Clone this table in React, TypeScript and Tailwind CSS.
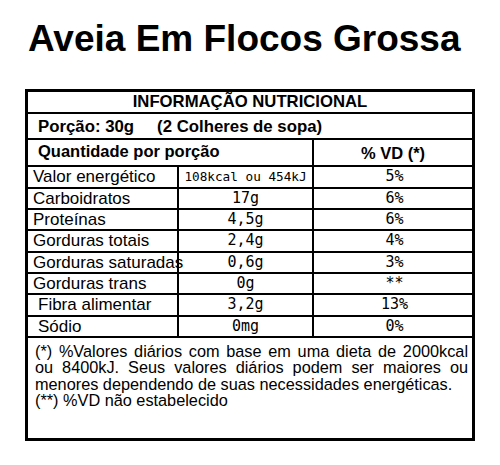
const rows = [
  { label: "Valor energético", value: "108kcal ou 454kJ", vd: "5%", h: "h-[22px]", small: true },
  { label: "Carboidratos", value: "17g", vd: "6%", h: "h-[21px]" },
  { label: "Proteínas", value: "4,5g", vd: "6%", h: "h-[21px]" },
  { label: "Gorduras totais", value: "2,4g", vd: "4%", h: "h-[22px]" },
  { label: "Gorduras saturadas", value: "0,6g", vd: "3%", h: "h-[21px]" },
  { label: "Gorduras trans", value: "0g", vd: "**", h: "h-[21px]" },
  { label: "Fibra alimentar", value: "3,2g", vd: "13%", h: "h-[22px]", indent: true },
  { label: "Sódio", value: "0mg", vd: "0%", h: "h-[21px]", indent: true },
];

function NutritionRow({
  label,
  value,
  vd,
  h,
  small,
  indent,
}: {
  label: string;
  value: string;
  vd: string;
  h: string;
  small?: boolean;
  indent?: boolean;
}) {
  return (
    <div className={`flex border-b-2 border-black ${h}`}>
      <div
        className={`w-[151px] shrink-0 border-r-2 border-black whitespace-nowrap text-[17px] leading-[19px] ${
          indent ? "pl-[10px]" : "pl-[5px]"
        }`}
      >
        {label}
      </div>
      <div
        className={`w-[135px] shrink-0 border-r-2 border-black text-center whitespace-nowrap font-['DejaVu_Sans_Mono',monospace] leading-[19px] ${
          small ? "text-[12.7px]" : "text-[15px]"
        }`}
      >
        {value}
      </div>
      <div className="flex-1 pl-[3px] text-center font-['DejaVu_Sans_Mono',monospace] text-[15px] leading-[19px]">
        {vd}
      </div>
    </div>
  );
}

export default function App() {
  return (
    <div className="h-[465px] w-[500px] bg-white font-['Liberation_Sans',Arial,sans-serif] text-black">
      <h1 className="pl-[28px] pt-[20px] text-[37px] font-bold leading-[37px]">
        Aveia Em Flocos Grossa
      </h1>

      <div className="ml-[25px] mt-[32px] w-[450px] border-[3px] border-black">
        <div className="h-[22px] border-b-2 border-black text-center text-[16.7px] font-bold leading-[20px]">
          INFORMAÇÃO NUTRICIONAL
        </div>
        <div className="h-[26px] border-b-2 border-black pl-[10px] pt-[2px] text-[16.8px] font-bold leading-[22px]">
          <span>Porção: 30g</span>
          <span className="ml-[23px]">(2 Colheres de sopa)</span>
        </div>
        <div className="flex h-[27px] border-b-2 border-black text-[16.5px] font-bold leading-[23px]">
          <div className="w-[286px] shrink-0 border-r-2 border-black pl-[10px]">
            Quantidade por porção
          </div>
          <div className="flex-1 pt-[2px] text-center">% VD (*)</div>
        </div>

        {rows.map((row) => (
          <NutritionRow key={row.label} {...row} />
        ))}

        <div className="h-[100px] pl-[7px] pr-[4px] pt-[5px] text-[16.3px] leading-[16.4px]">
          <p className="text-justify">
            (*) %Valores diários com base em uma dieta de 2000kcal ou 8400kJ.
            Seus valores diários podem ser maiores ou menores dependendo de suas
            necessidades energéticas.
          </p>
          <p>(**) %VD não estabelecido</p>
        </div>
      </div>
    </div>
  );
}
